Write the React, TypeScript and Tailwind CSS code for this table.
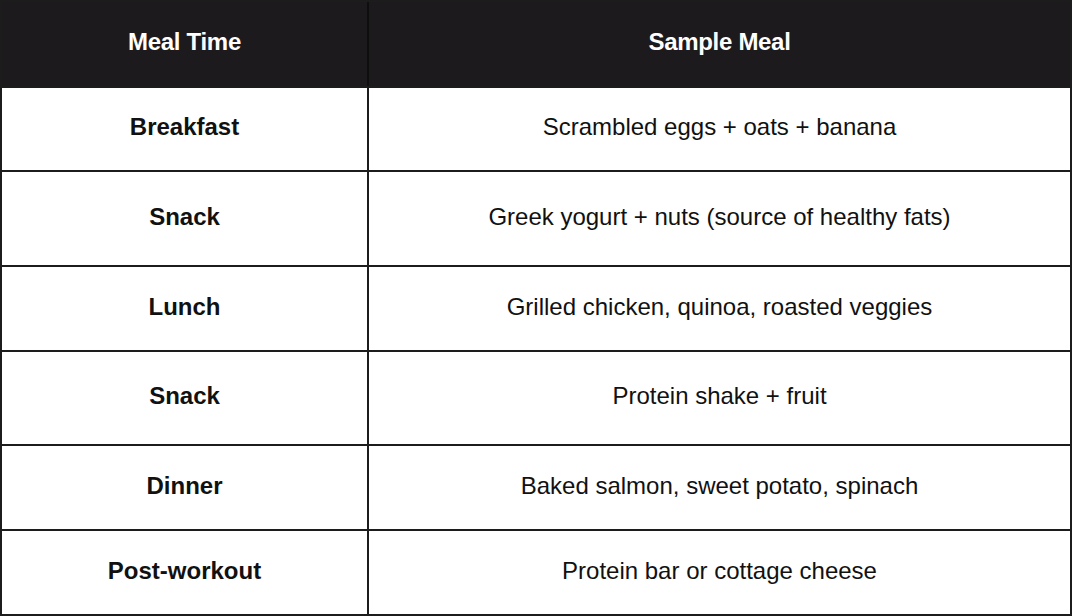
const rows = [
  { time: "Breakfast", meal: "Scrambled eggs + oats + banana", h: "h-[84px]" },
  { time: "Snack", meal: "Greek yogurt + nuts (source of healthy fats)", h: "h-[95px]" },
  { time: "Lunch", meal: "Grilled chicken, quinoa, roasted veggies", h: "h-[85px]" },
  { time: "Snack", meal: "Protein shake + fruit", h: "h-[94px]" },
  { time: "Dinner", meal: "Baked salmon, sweet potato, spinach", h: "h-[85px]" },
  { time: "Post-workout", meal: "Protein bar or cottage cheese", h: "h-[85px]" },
];

export default function App() {
  return (
    <div className="w-[1073px] h-[616px] bg-white font-['Liberation_Sans',Arial,sans-serif] text-[24px] leading-none text-[#111]">
      <div className="w-[1072px] border-2 border-[#1c1c1c] flex flex-col">
        <div className="flex h-[84px] bg-[#1c1a1d] text-white font-bold tracking-[-0.3px]">
          <div className="w-[367px] border-r-2 border-[#0e0e0e] flex items-center justify-center pb-1">
            Meal Time
          </div>
          <div className="flex-1 flex items-center justify-center pb-1">Sample Meal</div>
        </div>
        {rows.map((r, i) => (
          <div key={i} className={`flex border-t-2 border-[#1c1c1c] ${r.h}`}>
            <div className="w-[367px] border-r-2 border-[#1c1c1c] flex items-center justify-center font-bold pb-1">
              {r.time}
            </div>
            <div className="flex-1 flex items-center justify-center pb-1">{r.meal}</div>
          </div>
        ))}
      </div>
    </div>
  );
}
